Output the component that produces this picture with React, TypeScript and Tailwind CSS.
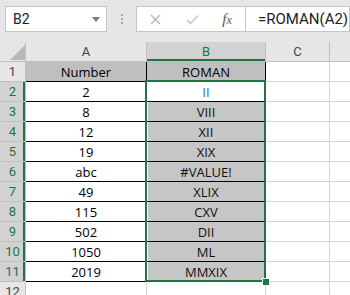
import React from "react";

const rows: { n: number; a: string; b: string }[] = [
  { n: 2, a: "2", b: "II" },
  { n: 3, a: "8", b: "VIII" },
  { n: 4, a: "12", b: "XII" },
  { n: 5, a: "19", b: "XIX" },
  { n: 6, a: "abc", b: "#VALUE!" },
  { n: 7, a: "49", b: "XLIX" },
  { n: 8, a: "115", b: "CXV" },
  { n: 9, a: "502", b: "DII" },
  { n: 10, a: "1050", b: "ML" },
  { n: 11, a: "2019", b: "MMXIX" },
];

const cellFont = { fontFamily: '"Open Sans", "Noto Sans", sans-serif' };
const uiFont = { fontFamily: 'Roboto, "Noto Sans", sans-serif' };

function Toolbar() {
  return (
    <div className="h-[42px] bg-[#e6e6e6] flex items-start pt-[6px]" style={uiFont}>
      <div className="ml-[5px] w-[102px] h-[26px] border border-[#c6c6c6] bg-white flex items-center pl-[7px] pr-[6px]">
        <span className="text-[14px] text-[#222] leading-none">B2</span>
        <svg className="ml-auto" width="8" height="5" viewBox="0 0 8 5">
          <path d="M0 0 L8 0 L4 5 Z" fill="#7a7a7a" />
        </svg>
      </div>
      <div className="ml-[14px] mt-[8px] flex flex-col gap-[2px]">
        <div className="w-[2px] h-[2px] bg-[#a8a8a8]" />
        <div className="w-[2px] h-[2px] bg-[#a8a8a8]" />
        <div className="w-[2px] h-[2px] bg-[#a8a8a8]" />
      </div>
      <div className="ml-[13px] w-[110px] h-[26px] border border-[#c6c6c6] bg-white flex items-center">
        <div className="w-[36px] flex justify-center">
          <svg width="11" height="11" viewBox="0 0 11 11">
            <path d="M1 1 L10 10 M10 1 L1 10" stroke="#b4b4b4" strokeWidth="1.3" />
          </svg>
        </div>
        <div className="w-[36px] flex justify-center pl-[3px]">
          <svg width="13" height="11" viewBox="0 0 13 11">
            <path d="M1 6 L4.5 9.5 L12 1.5" stroke="#c8c8c8" strokeWidth="1.6" fill="none" />
          </svg>
        </div>
        <div className="w-[36px] flex justify-center">
          <span
            className="italic text-[15px] text-[#555] leading-none"
            style={{ fontFamily: '"Liberation Serif", "DejaVu Serif", serif' }}
          >
            f<span className="text-[12px]">x</span>
          </span>
        </div>
      </div>
      <div className="flex-1 h-[26px] border-y border-r border-[#c6c6c6] bg-white flex items-center pl-[12px]">
        <span className="text-[15px] text-[#222] leading-none">=ROMAN(A2)</span>
      </div>
    </div>
  );
}

function Sheet() {
  const hdr = "border-r border-b border-[#c0c0c0] flex items-center justify-center text-[13px] leading-[19px] text-[#444]";
  const cell = "border-r border-b border-black flex items-center justify-center text-[13px] leading-[19px] pt-[1px]";
  return (
    <div className="grid grid-cols-[26px_121px_119px_64px_1fr] auto-rows-[20px]">
      {/* header row */}
      <div className="border-r border-b border-[#c0c0c0] bg-[#e6e6e6] relative">
        <svg className="absolute left-[10px] top-[3px]" width="15" height="15" viewBox="0 0 15 15">
          <path d="M15 0 L15 15 L0 15 Z" fill="#b8b8b8" />
        </svg>
      </div>
      <div className={`${hdr} bg-[#e6e6e6]`} style={uiFont}>A</div>
      <div className={`${hdr} bg-[#d2d2d2] text-[#217346] shadow-[inset_0_-2px_0_#217346]`} style={uiFont}>B</div>
      <div className={`${hdr} bg-[#e6e6e6]`} style={uiFont}>C</div>
      <div className="border-b border-[#c0c0c0] bg-[#e6e6e6]" />

      {/* row 1 */}
      <div className={`${hdr} bg-[#e6e6e6]`} style={uiFont}>1</div>
      <div className={`${cell} bg-[#bfbfbf] text-black`} style={cellFont}>Number</div>
      <div className={`${cell} bg-[#bfbfbf] text-black`} style={cellFont}>ROMAN</div>
      <div className="border-r border-b border-[#d4d4d4] bg-white" />
      <div className="border-b border-[#d4d4d4] bg-white" />

      {rows.map((r) => (
        <React.Fragment key={r.n}>
          <div className={`${hdr} bg-[#d2d2d2] text-[#217346] shadow-[inset_-2px_0_0_#217346]`} style={uiFont}>{r.n}</div>
          <div className={`${cell} bg-white text-black`} style={cellFont}>{r.a}</div>
          {r.n === 2 ? (
            <div className={`${cell} bg-white text-[#1f6fbf]`} style={cellFont}>{r.b}</div>
          ) : (
            <div className={`${cell} bg-[#c6c6c6] shadow-[inset_1px_0_0_#fff] text-[#111]`} style={cellFont}>{r.b}</div>
          )}
          <div className="border-r border-b border-[#d4d4d4] bg-white" />
          <div className="border-b border-[#d4d4d4] bg-white" />
        </React.Fragment>
      ))}

      {/* row 12 */}
      <div className={`${hdr} bg-[#e6e6e6]`} style={uiFont}>12</div>
      <div className="border-r border-b border-[#d4d4d4] bg-white" />
      <div className="border-r border-b border-[#d4d4d4] bg-white" />
      <div className="border-r border-b border-[#d4d4d4] bg-white" />
      <div className="border-b border-[#d4d4d4] bg-white" />
    </div>
  );
}

export default function App() {
  return (
    <div className="relative w-[350px] h-[295px] overflow-hidden bg-white">
      <Toolbar />
      <Sheet />
      {/* selection rectangle */}
      <div className="absolute left-[145px] top-[80px] w-[121px] h-[202px] border-2 border-[#217346] pointer-events-none" />
      {/* fill handle */}
      <div className="absolute left-[262px] top-[278px] w-[7px] h-[7px] border-l border-t border-white bg-[#217346]" />
    </div>
  );
}
